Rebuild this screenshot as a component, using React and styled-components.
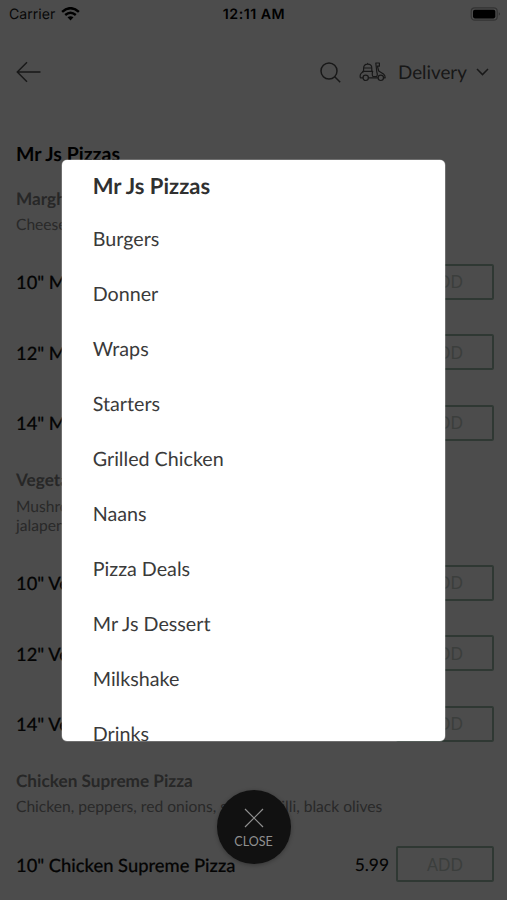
import React from "react";
import styled, { createGlobalStyle } from "styled-components";

const GlobalStyle = createGlobalStyle`
  * { box-sizing: border-box; }
  body { margin: 0; background: #fff; font-family: Lato, "Open Sans", sans-serif; text-rendering: geometricPrecision; }
`;

const Screen = styled.div`
  position: relative;
  width: 507px;
  height: 900px;
  overflow: hidden;
  background: #fff;
`;

const StatusBar = styled.header`
  display: grid;
  grid-template-columns: 1fr auto 1fr;
  align-items: center;
  height: 28px;
  padding: 0 6px 0 9px;
  font-family: Inter, sans-serif;
  font-size: 14.1px;
  color: #000;
`;

const Carrier = styled.div`
  display: flex;
  align-items: center;
  gap: 6px;
  color: #202020;
`;

const Clock = styled.div`
  margin-right: 2px;
  font-size: 14.2px;
  font-weight: 600;
  letter-spacing: 0.5px;
`;

const BatterySlot = styled.div`
  display: flex;
  justify-content: flex-end;
`;

const NavBar = styled.nav`
  display: flex;
  align-items: center;
  height: 88px;
  padding: 0 18px 0 16px;
  color: #505050;
  svg { display: block; }
`;

const Spacer = styled.div`
  flex: 1;
`;

const Mode = styled.div`
  display: flex;
  align-items: center;
  margin-left: 18px;
  font-size: 18.8px;
  line-height: 24px;
`;

const ModeLabel = styled.span`
  width: 78px;
  margin-left: 12px;
  padding-top: 1px;
  white-space: nowrap;
`;

const Title = styled.h1`
  height: 60.5px;
  margin: 0;
  padding: 27px 16px 0;
  font-size: 19.5px;
  line-height: 24px;
  color: #000;
`;

const Group = styled.section`
  padding: 12px 13px 0 16px;
`;

const GroupName = styled.h2`
  margin: 0 0 7.5px;
  font-size: 17.2px;
  font-weight: 700;
  line-height: 20px;
  color: #848484;
`;

const Description = styled.p`
  margin: 0 0 11.3px;
  font-size: 15.6px;
  line-height: 19.25px;
  white-space: pre-line;
  color: #8a8a8a;
`;

const OptionRow = styled.div`
  display: flex;
  align-items: center;
  height: 70.5px;
  font-size: 18.35px;
  line-height: 24px;
  color: #101010;
`;

const OptionName = styled.span`
  flex: 1;
  padding-top: 1px;
  font-weight: 500;
  -webkit-text-stroke: 0.2px #101010;
  white-space: nowrap;
`;

const Price = styled.span`
  margin-right: 7px;
  padding-top: 1px;
  font-size: 17.4px;
  font-weight: 500;
`;

const AddButton = styled.button`
  width: 98px;
  height: 36px;
  padding: 0;
  border: 2px solid #9dbdac;
  border-radius: 2px;
  background: transparent;
  font: 400 16.3px Lato, sans-serif;
  letter-spacing: 0.1px;
  color: #c6d0ca;
`;

const Backdrop = styled.div`
  position: absolute;
  inset: 0;
  display: flex;
  flex-direction: column;
  align-items: center;
  padding-top: 159.5px;
  background: rgba(0, 0, 0, 0.7);
`;

const CategoryPanel = styled.ul`
  width: 383.5px;
  height: 581.5px;
  margin: 0;
  padding: 0 31px;
  overflow: hidden;
  list-style: none;
  border-radius: 5px;
  background: #fff;
  box-shadow: 0 0 0 0.5px rgba(255, 255, 255, 0.4);
`;

const Category = styled.li`
  height: ${(p) => (p.$active ? 52 : 55)}px;
  font-size: ${(p) => (p.$active ? 22 : 19.7)}px;
  font-weight: ${(p) => (p.$active ? 700 : 400)};
  line-height: ${(p) => (p.$active ? 52 : 56)}px;
  color: ${(p) => (p.$active ? "#303030" : "#3a3a3a")};
  white-space: nowrap;
`;

const CloseButton = styled.button`
  display: flex;
  flex-direction: column;
  align-items: center;
  width: 74px;
  height: 74px;
  margin-top: 48.5px;
  padding: 18px 0 0;
  border: 0;
  border-radius: 50%;
  background: #111;
  box-shadow: 0 1px 4px rgba(0, 0, 0, 0.3);
  font: 400 12.5px/16px Lato, sans-serif;
  color: #909090;
  svg { display: block; margin-bottom: 6px; }
`;

const WifiIcon = () => (
  <svg width="19" height="14" viewBox="0 0 19 14" fill="none" stroke="#000" strokeWidth="2.5">
    <path d="M1.1 4.9Q9.5-2.5 17.9 4.9M4.2 8Q9.5 3.5 14.8 8" />
    <path d="M6.5 10.3Q9.5 8 12.5 10.3L9.5 13.4Z" fill="#000" stroke="none" />
  </svg>
);

const BatteryIcon = () => (
  <svg width="31" height="14" viewBox="0 0 31 14">
    <rect x="1.2" y=".8" width="26" height="12.4" rx="3.5" fill="none" stroke="#aaa" strokeWidth="1.2" />
    <rect x="3" y="2.7" width="22.3" height="8.7" rx="1.8" fill="#000" />
    <path d="M28.8 5.2q2 1.7 0 3.5z" fill="#888" />
  </svg>
);

const BackIcon = () => (
  <svg width="25" height="22" viewBox="0 0 25 22" fill="none" stroke="currentColor" strokeWidth="1.5">
    <path d="M11 1.3 1.3 11 11 20.7M1.3 11H24.5" />
  </svg>
);

const SearchIcon = () => (
  <svg width="21" height="21" viewBox="0 0 21 21" fill="none" stroke="currentColor" strokeWidth="1.5">
    <circle cx="9" cy="9" r="8" />
    <path d="m14.7 14.7 5.5 5.5" />
  </svg>
);

const ScooterIcon = () => (
  <svg width="27" height="20" viewBox="0 0 27 20" fill="none" stroke="currentColor" strokeWidth="1.2" strokeLinejoin="round" strokeLinecap="round">
    <path d="M4.6 9V6.2Q4.6 2.2 8.7 2.2T12.8 6.2V9M4.6 6h8.2M3.6 9.3h10M8.7 2.2v-.8" />
    <path d="M4.2 15.8H1.4Q.2 11.4 4.6 9.8M13.6 9.3q-.9 4 .4 5.2h3.6q1.3-1.4.2-4.5L16.8 1H20.4v3.2H18.4L19.7 9l4.8 3.1q1.6 1.2 1.7 3.7h-1.7" />
    <path d="M9.3 15.8h9.6" />
    <circle cx="6.7" cy="15.8" r="2.7" />
    <circle cx="21.8" cy="15.8" r="2.7" />
  </svg>
);

const ChevronIcon = () => (
  <svg width="13" height="8" viewBox="0 0 13 8" fill="none" stroke="currentColor" strokeWidth="1.5">
    <path d="m1 1 5.5 5.6L12 1" />
  </svg>
);

const CloseIcon = () => (
  <svg width="20" height="20" viewBox="0 0 20 20" fill="none" stroke="currentColor" strokeWidth="1.2">
    <path d="m1 1 18 18M19 1 1 19" />
  </svg>
);

const categories = [
  "Mr Js Pizzas",
  "Burgers",
  "Donner",
  "Wraps",
  "Starters",
  "Grilled Chicken",
  "Naans",
  "Pizza Deals",
  "Mr Js Dessert",
  "Milkshake",
  "Drinks",
];

const groups = [
  { name: "Margherita Pizza", description: "Cheese, tomato", sizes: ['10"', '12"', '14"'] },
  { name: "Vegetarian Pizza", description: "Mushrooms, onions\njalapenos", sizes: ['10"', '12"', '14"'] },
  {
    name: "Chicken Supreme Pizza",
    description: "Chicken, peppers, red onions, sweet chilli, black olives",
    sizes: ['10"'],
    price: "5.99",
  },
];

export default function App() {
  return (
    <Screen>
      <GlobalStyle />
      <StatusBar>
        <Carrier>Carrier <WifiIcon /></Carrier>
        <Clock>12:11 AM</Clock>
        <BatterySlot><BatteryIcon /></BatterySlot>
      </StatusBar>
      <NavBar>
        <BackIcon />
        <Spacer />
        <SearchIcon />
        <Mode>
          <ScooterIcon />
          <ModeLabel>Delivery</ModeLabel>
          <ChevronIcon />
        </Mode>
      </NavBar>
      <Title>Mr Js Pizzas</Title>
      {groups.map((group) => (
        <Group key={group.name}>
          <GroupName>{group.name}</GroupName>
          <Description>{group.description}</Description>
          {group.sizes.map((size) => (
            <OptionRow key={size}>
              <OptionName>{size} {group.name}</OptionName>
              {group.price && <Price>{group.price}</Price>}
              <AddButton>ADD</AddButton>
            </OptionRow>
          ))}
        </Group>
      ))}
      <Backdrop>
        <CategoryPanel>
          {categories.map((name, i) => (
            <Category key={name} $active={i === 0}>{name}</Category>
          ))}
        </CategoryPanel>
        <CloseButton>
          <CloseIcon />
          CLOSE
        </CloseButton>
      </Backdrop>
    </Screen>
  );
}
